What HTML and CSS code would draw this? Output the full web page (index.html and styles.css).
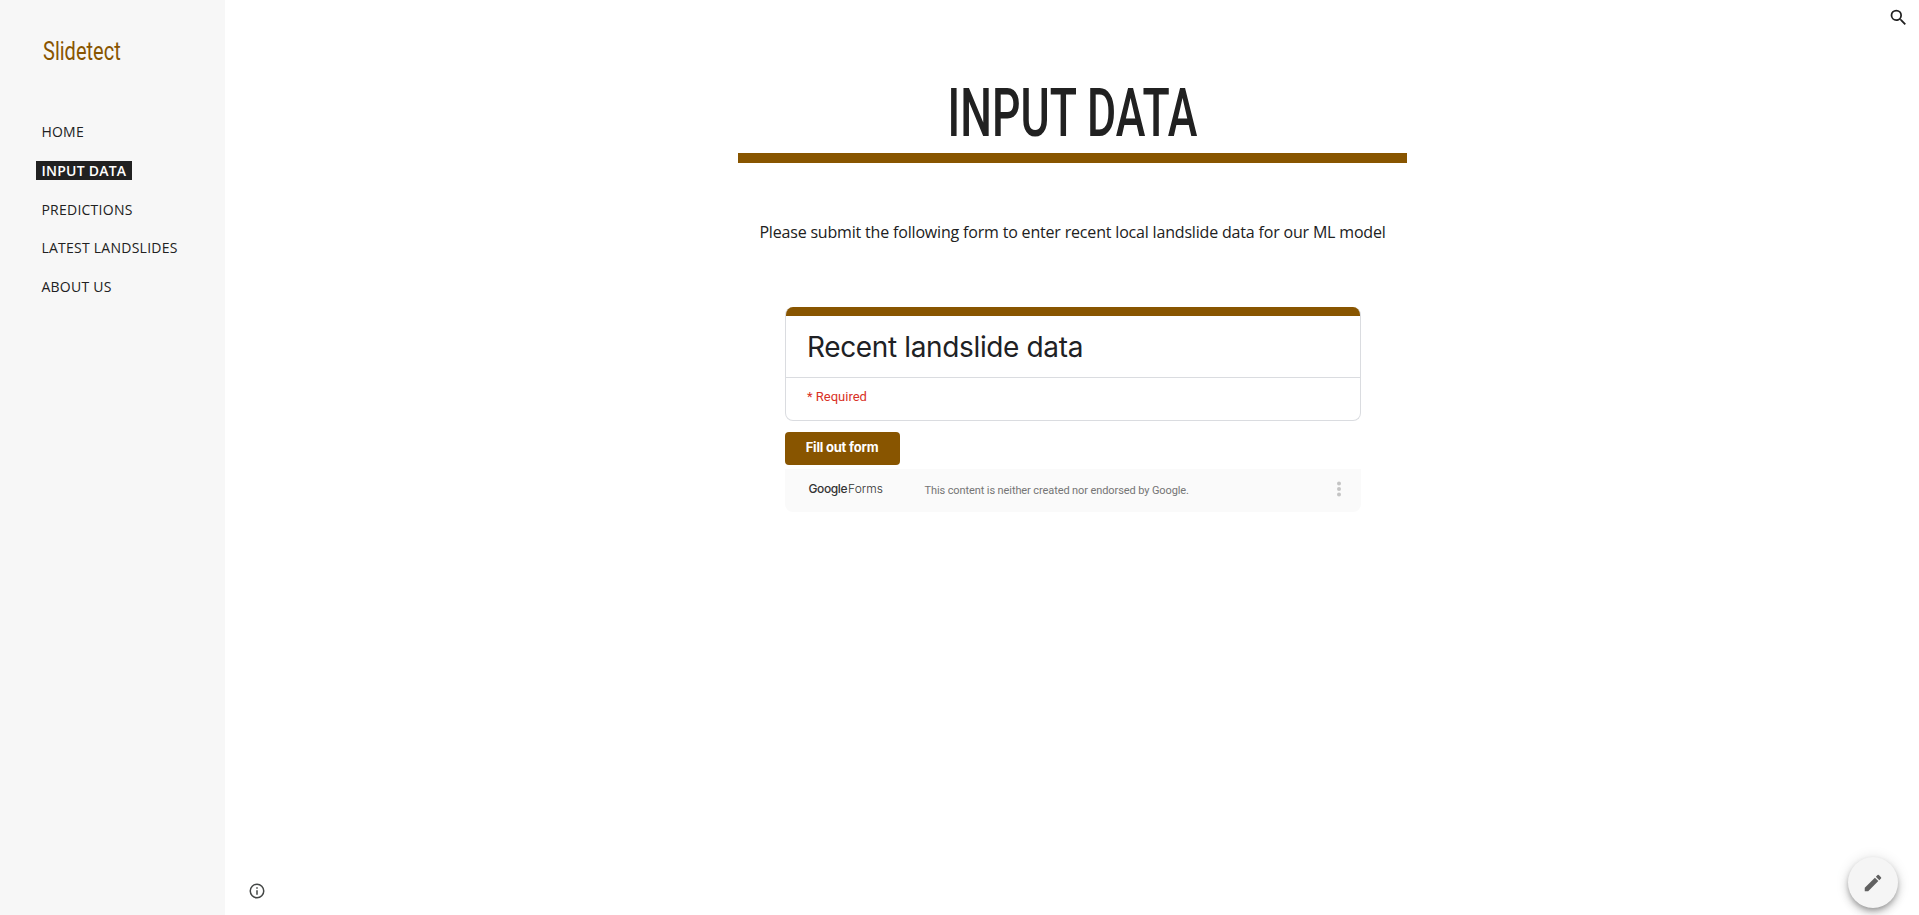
FILE: index.html
```html
<!DOCTYPE html>
<html lang="en">
<head>
<meta charset="utf-8">
<title>Slidetect - Input Data</title>
<link rel="stylesheet" href="styles.css">
</head>
<body>
<div class="app">
  <aside class="sidebar">
    <a class="brand">Slidetect</a>
    <nav class="nav">
      <a class="nav-item"><span>HOME</span></a>
      <a class="nav-item active"><span>INPUT DATA</span></a>
      <a class="nav-item"><span>PREDICTIONS</span></a>
      <a class="nav-item"><span>LATEST LANDSLIDES</span></a>
      <a class="nav-item"><span>ABOUT US</span></a>
    </nav>
  </aside>
  <main class="content">
    <h1 class="title"><span>INPUT DATA</span></h1>
    <hr class="rule">
    <p class="intro">Please submit the following form to enter recent local landslide data for our ML model</p>
    <section class="form">
      <div class="card">
        <h2 class="card-title">Recent landslide data</h2>
        <p class="required">* Required</p>
      </div>
      <button class="fill">Fill out form</button>
      <footer class="form-footer">
        <span class="logo"><b>Google</b><span>Forms</span></span>
        <span class="disclaimer">This content is neither created nor endorsed by Google.</span>
        <svg class="more" viewBox="0 0 4 16"><circle cx="2" cy="2.5" r="2"/><circle cx="2" cy="8" r="2"/><circle cx="2" cy="13.5" r="2"/></svg>
      </footer>
    </section>
  </main>
</div>
<svg class="search" viewBox="0 0 24 24"><path d="M15.5 14h-.79l-.28-.27A6.47 6.47 0 0 0 16 9.5 6.5 6.5 0 1 0 9.5 16c1.61 0 3.09-.59 4.23-1.57l.27.28v.79l5 4.99L20.49 19l-4.99-5zm-6 0A4.5 4.5 0 1 1 14 9.5 4.5 4.5 0 0 1 9.5 14z"/></svg>
<svg class="info" viewBox="0 0 24 24"><path d="M11 17h2v-6h-2v6zm1-15a10 10 0 1 0 0 20 10 10 0 0 0 0-20zm0 18a8 8 0 1 1 0-16 8 8 0 0 1 0 16zM11 9h2V7h-2v2z"/></svg>
<button class="edit" aria-label="Edit"><svg viewBox="0 0 24 24"><path d="M3 17.25V21h3.75L17.81 9.94l-3.75-3.75L3 17.25zM20.71 7.04a1 1 0 0 0 0-1.41l-2.34-2.34a1 1 0 0 0-1.41 0l-1.83 1.83 3.75 3.75 1.83-1.83z"/></svg></button>
</body>
</html>
```
FILE: styles.css
```css
* { box-sizing: border-box; }
body {
  margin: 0;
  background: #fff;
  color: #212121;
  font-family: "Open Sans", sans-serif;
  overflow: hidden;
}
h1, h2, p { margin: 0; font-weight: 400; }
button { border: 0; padding: 0; }
.app { display: flex; height: 915px; }
.sidebar { width: 225px; background: #f7f7f7; padding-top: 31px; }
.brand {
  display: block;
  width: max-content;
  margin-left: 43px;
  font: 400 26px/40px Roboto, sans-serif;
  color: #885500;
  transform: scaleX(.77);
  transform-origin: left;
}
.nav { display: flex; flex-direction: column; padding: 41.4px 0 0 36px; }
.nav-item {
  display: flex;
  align-items: center;
  height: 38.7px;
  font-size: 14px;
  letter-spacing: .25px;
}
.nav-item span { padding: 0 5.4px; line-height: 19px; }
.nav-item.active { font-weight: 600; }
.active span { background: #212121; color: #fff; width: 96px; padding-right: 0; white-space: nowrap; }
.content {
  flex: 1;
  display: flex;
  flex-direction: column;
  align-items: center;
  padding: 72px 0 0 1px;
}
.title {
  height: 81px;
  font: 500 66px/83px Roboto, sans-serif;
  white-space: nowrap;
}
.title span { display: inline-block; transform: scaleX(.677); }
.rule { width: 669px; height: 10px; margin: 0; border: 0; background: #885500; }
.intro { margin-top: 55px; font-size: 16px; line-height: 28px; letter-spacing: -.18px; }
.form { width: 576px; margin-top: 61px; font-family: Roboto, sans-serif; }
.card {
  height: 114px;
  border: 1px solid #dadce0;
  border-top: 0;
  border-radius: 8px;
  overflow: hidden;
}
.card::before { content: ""; display: block; height: 9px; margin: 0 -1px; background: #885500; }
.card-title {
  height: 62px;
  padding-left: 21.5px;
  border-bottom: 1px solid #dadce0;
  font: 400 28px/63px Inter, sans-serif;
  letter-spacing: -.36px;
  color: #202124;
}
.required { padding-left: 21.5px; font-size: 13px; line-height: 38px; color: #d93025; }
.fill {
  display: block;
  width: 115px;
  height: 33px;
  margin-top: 11px;
  border-radius: 4px;
  background: #885500;
  color: #fff;
  font: 700 13px/31px Inter, sans-serif;
  letter-spacing: -.2px;
  padding-bottom: 2px;
}
.form-footer {
  display: flex;
  align-items: center;
  height: 43px;
  margin-top: 4px;
  padding: 0 20px 0 23px;
  background: #fafafa;
  border-radius: 0 0 8px 8px;
}
.logo { display: flex; gap: 1px; width: 117px; padding: 0 0 3px 1px; font: 300 12px/16px Inter, sans-serif; color: #333; }
.logo b { font-weight: 500; letter-spacing: -.4px; }
.disclaimer { flex: 1; font-size: 11px; letter-spacing: -.1px; color: #757575; }
.more { width: 4px; height: 16px; margin-bottom: 4px; fill: #c4c4c4; }
.search { position: absolute; left: 1888px; top: 7px; width: 21px; height: 21px; fill: #212121; }
.info { position: absolute; left: 248px; top: 882px; width: 18px; height: 18px; fill: #444746; }
.edit {
  position: absolute;
  left: 1848px;
  top: 857px;
  width: 50px;
  height: 51px;
  display: grid;
  place-items: center;
  border-radius: 50%;
  background: #f5f5f5;
  box-shadow: 0 3px 5px -1px rgba(0,0,0,.25), 0 5px 9px rgba(0,0,0,.16), 0 1px 14px rgba(0,0,0,.12);
}
.edit svg { width: 22px; height: 22px; fill: #616161; }
```
